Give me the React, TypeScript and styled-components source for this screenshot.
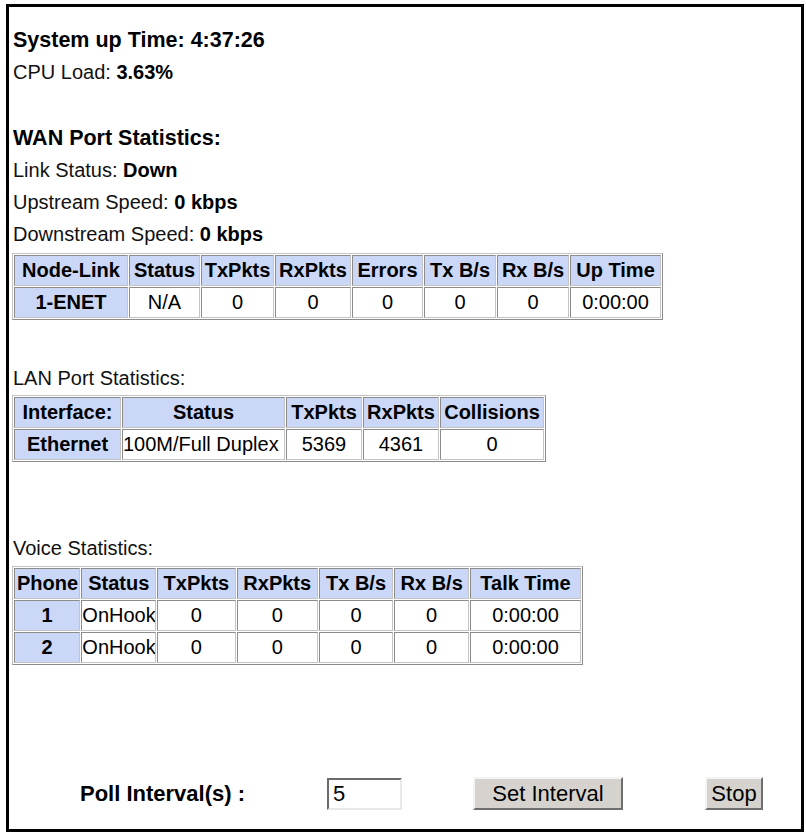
import React from 'react'
import styled, { createGlobalStyle } from 'styled-components'

const GlobalStyle = createGlobalStyle`
    html, body {
        margin: 0;
        padding: 0;
        background: #ffffff;
    }
    body {
        font-family: 'Liberation Sans', Arial, sans-serif;
        color: #000000;
    }
`

const Frame = styled.div`
    box-sizing: border-box;
    width: 798px;
    height: 828px;
    margin: 4px 0 0 6px;
    border: 3px solid #000000;
    padding: 17px 0 0 3px;
    display: flex;
    flex-direction: column;
`

type ILine = {
    $gap?: number
}

const Title = styled.div<ILine>`
    font-size: 21.5px;
    font-weight: bold;
    line-height: 32px;
    padding-left: 1px;
    margin-top: ${(props) => props.$gap || 0}px;
`

const Line = styled.div<ILine>`
    font-size: 20px;
    line-height: 32px;
    padding-left: 1px;
    color: #111111;
    margin-top: ${(props) => props.$gap || 0}px;

    b {
        font-weight: bold;
        color: #000000;
    }
`

const StatTable = styled.table<{ $w: number; $gap?: number }>`
    table-layout: fixed;
    width: ${(props) => props.$w}px;
    border-collapse: separate;
    border-spacing: 1px;
    border: 1px solid;
    border-color: #c4c4c4 #8c8c8c #8c8c8c #c4c4c4;
    margin-top: ${(props) => props.$gap || 0}px;
    font-size: 20px;
`

const Col = styled.col<{ $w: number }>`
    width: ${(props) => props.$w}px;
`

const HeadCell = styled.th`
    background: #cbd7f7;
    font-weight: bold;
    text-align: center;
    line-height: 23px;
    padding: 3px 2px;
    border: 1px solid;
    border-color: #8c8c8c #c4c4c4 #c4c4c4 #8c8c8c;
    white-space: nowrap;
    overflow: hidden;
`

const DataCell = styled.td<{ $key?: boolean; $left?: boolean }>`
    background: ${(props) => (props.$key ? '#cbd7f7' : '#ffffff')};
    font-weight: ${(props) => (props.$key ? 'bold' : 'normal')};
    text-align: ${(props) => (props.$left ? 'left' : 'center')};
    line-height: 23px;
    padding: 3px ${(props) => (props.$left ? '0' : '2px')};
    border: 1px solid;
    border-color: #8c8c8c #c4c4c4 #c4c4c4 #8c8c8c;
    white-space: nowrap;
    overflow: hidden;
`

const Footer = styled.div`
    margin-top: auto;
    margin-bottom: 19px;
    padding-left: 68px;
    display: grid;
    grid-template-columns: 247px 146px 232px auto;
    align-items: center;
    font-size: 22px;
`

const PollLabel = styled.div`
    font-weight: bold;
`

const IntervalInput = styled.input`
    box-sizing: border-box;
    width: 75px;
    height: 32px;
    font-family: 'Liberation Sans', Arial, sans-serif;
    font-size: 22px;
    padding: 0 4px;
    border: 2px solid;
    border-color: #6a6a6a #e8e8e8 #e8e8e8 #6a6a6a;
    background: #ffffff;
    outline: none;
`

const Button = styled.button<{ $w: number }>`
    box-sizing: border-box;
    width: ${(props) => props.$w}px;
    height: 33px;
    font-family: 'Liberation Sans', Arial, sans-serif;
    font-size: 22px;
    color: #000000;
    background: #d6d3ce;
    border: 2px solid;
    border-color: #f4f4f4 #6e6e6e #6e6e6e #f4f4f4;
    padding: 0;
    justify-self: start;
`

type IRow = string[]

type ITable = {
    width: number
    cols: number[]
    head: string[]
    rows: IRow[]
    gap?: number
    leftCol?: number
}

const Stats = ({ width, cols, head, rows, gap, leftCol }: ITable) => (
    <StatTable $w={width} $gap={gap}>
        <colgroup>
            {cols.map((w, i) => (
                <Col key={i} $w={w} />
            ))}
        </colgroup>
        <thead>
            <tr>
                {head.map((h) => (
                    <HeadCell key={h}>{h}</HeadCell>
                ))}
            </tr>
        </thead>
        <tbody>
            {rows.map((row, r) => (
                <tr key={r}>
                    {row.map((cell, c) => (
                        <DataCell
                            key={c}
                            $key={c === 0}
                            $left={c === leftCol}
                        >
                            {cell}
                        </DataCell>
                    ))}
                </tr>
            ))}
        </tbody>
    </StatTable>
)

export default function App() {
    return (
        <>
            <GlobalStyle />
            <Frame>
                <Title>System up Time: 4:37:26</Title>
                <Line>
                    CPU Load: <b>3.63%</b>
                </Line>

                <Title $gap={34}>WAN Port Statistics:</Title>
                <Line>
                    Link Status: <b>Down</b>
                </Line>
                <Line>
                    Upstream Speed: <b>0 kbps</b>
                </Line>
                <Line>
                    Downstream Speed: <b>0 kbps</b>
                </Line>
                <Stats
                    gap={3}
                    width={651}
                    cols={[114, 71, 73, 76, 71, 72, 72, 91]}
                    head={[
                        'Node-Link',
                        'Status',
                        'TxPkts',
                        'RxPkts',
                        'Errors',
                        'Tx B/s',
                        'Rx B/s',
                        'Up Time',
                    ]}
                    rows={[['1-ENET', 'N/A', '0', '0', '0', '0', '0', '0:00:00']]}
                />

                <Line $gap={42}>LAN Port Statistics:</Line>
                <Stats
                    gap={1}
                    width={534}
                    cols={[107, 163, 76, 76, 104]}
                    head={['Interface:', 'Status', 'TxPkts', 'RxPkts', 'Collisions']}
                    rows={[['Ethernet', '100M/Full Duplex', '5369', '4361', '0']]}
                    leftCol={1}
                />

                <Line $gap={70}>Voice Statistics:</Line>
                <Stats
                    gap={2}
                    width={571}
                    cols={[64, 72, 76, 78, 72, 72, 107]}
                    head={[
                        'Phone',
                        'Status',
                        'TxPkts',
                        'RxPkts',
                        'Tx B/s',
                        'Rx B/s',
                        'Talk Time',
                    ]}
                    rows={[
                        ['1', 'OnHook', '0', '0', '0', '0', '0:00:00'],
                        ['2', 'OnHook', '0', '0', '0', '0', '0:00:00'],
                    ]}
                    leftCol={1}
                />

                <Footer>
                    <PollLabel>Poll Interval(s) :</PollLabel>
                    <IntervalInput defaultValue="5" />
                    <Button $w={150}>Set Interval</Button>
                    <Button $w={58}>Stop</Button>
                </Footer>
            </Frame>
        </>
    )
}
